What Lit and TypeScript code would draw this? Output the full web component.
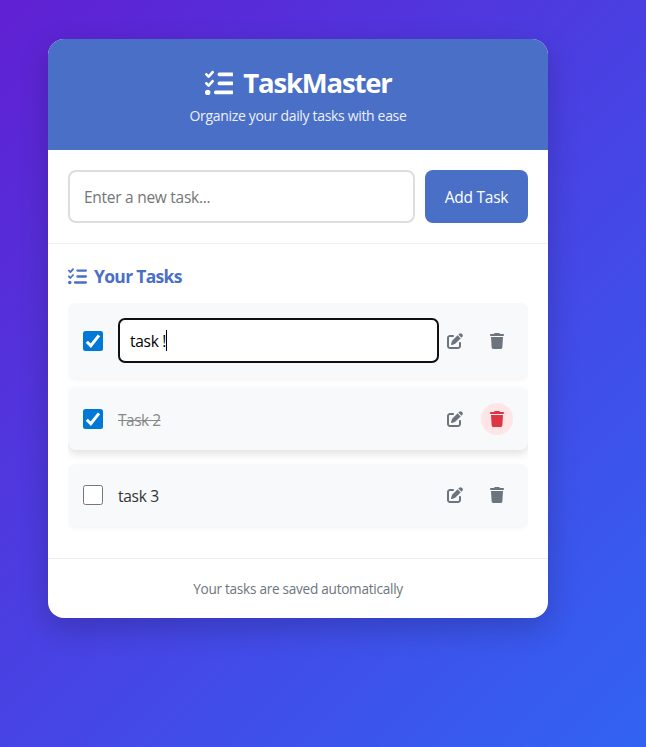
import { LitElement, html, css, svg } from "lit";
import { customElement } from "lit/decorators.js";
import { classMap } from "lit/directives/class-map.js";

const LIST = "M152.1 38.2c9.9 8.9 10.7 24 1.8 33.9l-72 80c-4.4 4.9-10.6 7.8-17.2 7.9s-12.9-2.4-17.6-7L7 113C-2.3 103.6-2.3 88.4 7 79s24.6-9.4 33.9 0l22.1 22.1 55.1-61.2c8.9-9.9 24-10.7 33.9-1.8zm0 160c9.9 8.9 10.7 24 1.8 33.9l-72 80c-4.4 4.9-10.6 7.8-17.2 7.9s-12.9-2.4-17.6-7L7 273c-9.4-9.4-9.4-24.6 0-33.9s24.6-9.4 33.9 0l22.1 22.1 55.1-61.2c8.9-9.9 24-10.7 33.9-1.8zM224 96c0-17.7 14.3-32 32-32l224 0c17.7 0 32 14.3 32 32s-14.3 32-32 32l-224 0c-17.7 0-32-14.3-32-32zm0 160c0-17.7 14.3-32 32-32l224 0c17.7 0 32 14.3 32 32s-14.3 32-32 32l-224 0c-17.7 0-32-14.3-32-32zM160 416c0-17.7 14.3-32 32-32l288 0c17.7 0 32 14.3 32 32s-14.3 32-32 32l-288 0c-17.7 0-32-14.3-32-32zM48 368a48 48 0 1 1 0 96 48 48 0 1 1 0-96z";
const PEN = "M471.6 21.7c-21.9-21.9-57.3-21.9-79.2 0L362.3 51.7l97.9 97.9 30.1-30.1c21.9-21.9 21.9-57.3 0-79.2L471.6 21.7zm-299.2 220c-6.1 6.1-10.8 13.6-13.5 21.9l-29.6 88.8c-2.9 8.6-.6 18.1 5.8 24.6s15.9 8.7 24.6 5.8l88.8-29.6c8.2-2.7 15.7-7.4 21.9-13.5L437.7 172.3 339.7 74.3 172.4 241.7zM96 64C43 64 0 107 0 160L0 416c0 53 43 96 96 96l256 0c53 0 96-43 96-96l0-96c0-17.7-14.3-32-32-32s-32 14.3-32 32l0 96c0 17.7-14.3 32-32 32L96 448c-17.7 0-32-14.3-32-32l0-256c0-17.7 14.3-32 32-32l96 0c17.7 0 32-14.3 32-32s-14.3-32-32-32L96 64z";
const TRASH = "M135.2 17.7L128 32 32 32C14.3 32 0 46.3 0 64S14.3 96 32 96l384 0c17.7 0 32-14.3 32-32s-14.3-32-32-32l-96 0-7.2-14.3C307.4 6.8 296.3 0 284.2 0L163.8 0c-12.1 0-23.2 6.8-28.6 17.7zM416 128L32 128 53.2 467c1.6 25.3 22.6 45 47.9 45l245.8 0c25.3 0 46.3-19.7 47.9-45L416 128z";

const icon = (d: string, w = 512) =>
  html`<svg class="icon" viewBox="0 0 ${w} 512">${svg`<path d=${d}></path>`}</svg>`;

interface Task {
  text: string;
  done: boolean;
  editing?: boolean;
  hover?: boolean;
}

const TASKS: Task[] = [
  { text: "task !", done: true, editing: true },
  { text: "Task 2", done: true, hover: true },
  { text: "task 3", done: false },
];

@customElement("app-root")
export class AppRoot extends LitElement {
  static styles = css`
    :host {
      display: block;
      box-sizing: border-box;
      height: 747px;
      padding: 39px 98px 0 48px;
      overflow: hidden;
      background: linear-gradient(135deg, #6a11cb -22%, #2575fc 127%);
      font-family: "Segoe UI", "Open Sans", "Noto Sans", sans-serif;
      font-size: 15.5px;
      letter-spacing: -0.27px;
      color: #333;
    }
    * { box-sizing: border-box; margin: 0; }
    .icon { display: block; height: 1em; fill: currentColor; flex: none; }
    .card {
      width: 500px;
      height: 579px;
      background: #fff;
      border-radius: 16px;
      overflow: hidden;
      box-shadow: 0 10px 30px rgba(0, 0, 0, 0.2);
    }
    header {
      height: 111px;
      padding-top: 25px;
      background: #4a6fc7;
      color: #fff;
      display: flex;
      flex-direction: column;
      align-items: center;
    }
    h1 {
      display: flex;
      align-items: center;
      gap: 10px;
      height: 38px;
      font-size: 27.5px;
      line-height: 40px;
      font-weight: 700;
      letter-spacing: -1.2px;
    }
    h1 .icon { font-size: 28.8px; }
    .sub { font-size: 14px; line-height: 20px; margin-top: 4px; opacity: 0.9; letter-spacing: -0.33px; }
    .add {
      display: flex;
      gap: 10px;
      height: 94px;
      padding: 20px;
      border-bottom: 1px solid #eee;
    }
    .field {
      flex: 1;
      display: flex;
      align-items: center;
      padding: 0 14px;
      border: 2px solid #ddd;
      border-radius: 8px;
      color: #757575;
    }
    .btn {
      width: 103px;
      display: flex;
      align-items: center;
      justify-content: center;
      border-radius: 8px;
      background: #4a6fc7;
      color: #fff;
    }
    .tasks { height: 314px; padding: 20px 20px 0; }
    h2 {
      display: flex;
      align-items: center;
      gap: 7px;
      height: 24px;
      margin-bottom: 15px;
      line-height: 24px;
      font-size: 17.5px;
      color: #4a6fc7;
      letter-spacing: -0.7px;
    }
    h2 .icon { font-size: 19px; }
    .list { display: flex; flex-direction: column; gap: 12px; overflow: hidden; height: 255px; }
    .item {
      display: flex;
      align-items: center;
      padding: 15px;
      background: #f8f9fb;
      border-radius: 8px;
      box-shadow: 0 2px 5px rgba(0, 0, 0, 0.05);
    }
    .item.hover { transform: translateY(-2px); box-shadow: 0 4px 8px rgba(0, 0, 0, 0.12); }
    .check {
      width: 20px;
      height: 20px;
      margin-right: 15px;
      flex: none;
      border: 1px solid #767676;
      border-radius: 2.5px;
      background: #fff;
    }
    .check.done { border: 0; background: #0078d7; }
    .check svg { display: block; fill: none; stroke: #fff; stroke-width: 3; }
    .label { flex: 1; padding-top: 2px; }
    .label.done { color: #888; text-decoration: line-through; letter-spacing: -0.5px; }
    .edit {
      flex: 1;
      display: flex;
      align-items: center;
      height: 45px;
      padding: 0 10px;
      border: 2px solid #101010;
      border-radius: 7px;
      background: #fff;
      color: #000;
    }
    .caret { width: 1px; height: 21px; background: #000; }
    .actions { display: flex; gap: 10px; }
    .act {
      width: 32px;
      height: 32px;
      display: flex;
      align-items: center;
      justify-content: center;
      border-radius: 50%;
      font-size: 16px;
      color: #6c757d;
    }
    .act.hot { background: #ffe5e5; color: #dc3545; }
    footer {
      height: 60px;
      border-top: 1px solid #eee;
      display: flex;
      align-items: center;
      justify-content: center;
      color: #6c757d;
      font-size: 13.6px;
    }
  `;

  private row(t: Task) {
    return html`<div class=${classMap({ item: true, hover: !!t.hover })}>
      <div class=${classMap({ check: true, done: t.done })}>
        ${t.done
          ? html`<svg width="20" height="20" viewBox="0 0 20 20"><path d="M3.8 10.8l4 4L16 4.4"></path></svg>`
          : ""}
      </div>
      ${t.editing
        ? html`<div class="edit"><span class="value">${t.text}</span><i class="caret"></i></div>`
        : html`<div class="label ${t.done ? "done" : ""}"><span>${t.text}</span></div>`}
      <div class="actions">
        <div class="act">${icon(PEN)}</div>
        <div class=${classMap({ act: true, hot: !!t.hover })}>${icon(TRASH, 448)}</div>
      </div>
    </div>`;
  }

  render() {
    return html`<main class="card">
      <header>
        <h1>${icon(LIST)}<span>TaskMaster</span></h1>
        <p class="sub">Organize your daily tasks with ease</p>
      </header>
      <section class="add">
        <div class="field"><span>Enter a new task...</span></div>
        <div class="btn"><span>Add Task</span></div>
      </section>
      <section class="tasks">
        <h2>${icon(LIST)}<span>Your Tasks</span></h2>
        <div class="list">${TASKS.map((t) => this.row(t))}</div>
      </section>
      <footer><span>Your tasks are saved automatically</span></footer>
    </main>`;
  }
}
